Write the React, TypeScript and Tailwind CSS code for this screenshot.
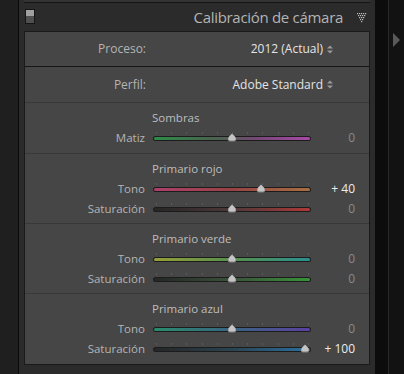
import React from "react";

const FONT = { fontFamily: '"Open Sans", "Noto Sans", sans-serif' };

type SliderProps = {
  label: string;
  value: number;
  gradient: string;
};

function UpDown() {
  return (
    <svg width="6" height="9" viewBox="0 0 6 9" className="ml-[4px] inline-block">
      <polygon points="0,3.5 3,0.5 6,3.5" fill="#9a9a9a" />
      <polygon points="0,5.5 3,8.5 6,5.5" fill="#9a9a9a" />
    </svg>
  );
}

function Slider({ label, value, gradient }: SliderProps) {
  const center = 79 + value * 0.73;
  const ticks = Array.from({ length: 11 }, (_, i) => 3 + i * 15.2);
  const text = value === 0 ? "0" : value > 0 ? `+ ${value}` : `- ${Math.abs(value)}`;
  return (
    <div className="flex h-[20px] items-center">
      <div className="w-[120px] text-right text-[11.5px] leading-none text-[#b4b4b4]">{label}</div>
      <div className="relative ml-[8px] h-[20px] w-[158px]">
        {ticks.map((t, i) => (
          <div
            key={i}
            className="absolute top-[4px] h-[2px] w-[1px] bg-[#5a5a5a]"
            style={{ left: t }}
          />
        ))}
        <div className="absolute left-0 top-[8px] h-[5px] w-[158px] rounded-full bg-[#1c1c1c] p-[1px]">
          <div className="h-[3px] w-full rounded-full" style={{ background: gradient }} />
        </div>
        <svg
          width="10"
          height="9"
          viewBox="0 0 10 9"
          className="absolute top-[5px]"
          style={{ left: center - 5 }}
        >
          <path d="M5 0.5 L8.5 4 L9.2 6.5 Q9.2 8.5 7 8.5 L3 8.5 Q0.8 8.5 0.8 6.5 L1.5 4 Z" fill="#858585" />
          <path d="M5 0.8 L8.2 4 L8.7 6 Q8.5 7.4 7 7.4 L3 7.4 Q1.5 7.4 1.3 6 L1.8 4 Z" fill="#c4c4c4" />
        </svg>
      </div>
      <div
        className={`flex-1 pr-[14px] text-right text-[12px] leading-none ${
          value === 0 ? "text-[#8a8a8a]" : "text-[#ececec]"
        }`}
      >
        {text}
      </div>
    </div>
  );
}

function Group({
  title,
  sliders,
  h,
  last,
}: {
  title: string;
  sliders: SliderProps[];
  h: string;
  last?: boolean;
}) {
  return (
    <div className={`${h} ${last ? "" : "border-b border-[#383838]"} flex flex-col pt-[7px]`}>
      <div className="flex h-[16px] items-center pl-[127px] text-[11.5px] leading-none text-[#bdbdbd]">
        {title}
      </div>
      <div className="mt-[2px] flex flex-col">
        {sliders.map((s, i) => (
          <Slider key={i} {...s} />
        ))}
      </div>
    </div>
  );
}

function DottedTriangle() {
  const dots: [number, number][] = [];
  const rows = [
    [0, 2, 4, 6, 8],
    [1, 3, 5, 7],
    [2, 4, 6],
    [3, 5],
    [4],
  ];
  rows.forEach((r, y) => r.forEach((x) => dots.push([x, y * 2])));
  return (
    <svg width="10" height="10" viewBox="0 0 10 10">
      {dots.map(([x, y], i) => (
        <rect key={i} x={x} y={y} width="1.2" height="1.2" fill="#bdbdbd" />
      ))}
    </svg>
  );
}

export default function App() {
  const gMatiz = "linear-gradient(to right, #2d8c48 0%, #4a634f 38%, #595959 50%, #744874 64%, #a848a8 100%)";
  const gRojoT = "linear-gradient(to right, #ad3f6c 0%, #984244 50%, #a86f40 100%)";
  const gRojoS = "linear-gradient(to right, #262626 0%, #4e3838 50%, #b03838 100%)";
  const gVerdeT = "linear-gradient(to right, #969f38 0%, #56904c 50%, #2a9090 100%)";
  const gVerdeS = "linear-gradient(to right, #262626 0%, #3a523a 50%, #389438 100%)";
  const gAzulT = "linear-gradient(to right, #2a8c6c 0%, #386482 50%, #5c40a0 100%)";
  const gAzulS = "linear-gradient(to right, #262626 0%, #2a4452 50%, #2a70a2 100%)";

  return (
    <div className="flex h-[374px] w-[404px] overflow-hidden bg-black" style={FONT}>
      <div className="w-[18px] bg-[#1f1f1f]" />
      <div className="w-[1px] bg-[#0a0a0a]" />
      <div className="flex w-[356px] flex-col bg-[#2b2b2b]">
        <div className="mx-[5px] h-[2px] bg-[#333333]" />
        <div className="mx-[5px] h-[1px] bg-[#141414]" />
        <div className="relative flex h-[28px] items-center">
          <div className="absolute left-[6px] top-[6px] flex h-[15px] w-[10px] flex-col border border-[#151515]">
            <div className="h-[6px] bg-[#a0a0a0]" />
            <div className="flex-1 bg-[#505050]" />
          </div>
          <div className="flex-1 pr-[32px] text-right text-[15px] leading-none tracking-[-0.3px] text-[#b4b4b4]">
            Calibración de cámara
          </div>
          <div className="absolute right-[8px] top-[10px]">
            <DottedTriangle />
          </div>
        </div>
        <div className="mx-[5px] flex h-[334px] flex-col border border-[#1a1a1a] bg-[#464646]">
          <div className="flex h-[35px] items-center border-b border-[#161616] text-[12px] leading-none">
            <div className="w-[121px] text-right text-[#b4b4b4]">Proceso:</div>
            <div className="flex flex-1 items-center justify-end pr-[36px] text-[#e4e4e4]">
              2012 (Actual)
              <UpDown />
            </div>
          </div>
          <div className="flex h-[36px] items-center border-b border-[#383838] text-[12px] leading-none">
            <div className="w-[121px] text-right text-[#b4b4b4]">Perfil:</div>
            <div className="flex flex-1 items-center justify-end pr-[36px] text-[#e4e4e4]">
              Adobe Standard
              <UpDown />
            </div>
          </div>
          <Group title="Sombras" h="h-[51px]" sliders={[{ label: "Matiz", value: 0, gradient: gMatiz }]} />
          <Group
            title="Primario rojo"
            h="h-[70px]"
            sliders={[
              { label: "Tono", value: 40, gradient: gRojoT },
              { label: "Saturación", value: 0, gradient: gRojoS },
            ]}
          />
          <Group
            title="Primario verde"
            h="h-[70px]"
            sliders={[
              { label: "Tono", value: 0, gradient: gVerdeT },
              { label: "Saturación", value: 0, gradient: gVerdeS },
            ]}
          />
          <Group
            title="Primario azul"
            h="h-[69px]"
            last
            sliders={[
              { label: "Tono", value: 0, gradient: gAzulT },
              { label: "Saturación", value: 100, gradient: gAzulS },
            ]}
          />
        </div>
      </div>
      <div className="w-[13px] bg-[#0c0c0c]" />
      <div className="w-[1px] bg-[#2a2a2a]" />
      <div className="flex flex-1 items-start justify-center bg-[#121212] pt-[33px]">
        <svg width="8" height="14" viewBox="0 0 8 14">
          <polygon points="0,0 7,7 0,14" fill="#5a5a5a" />
        </svg>
      </div>
    </div>
  );
}
